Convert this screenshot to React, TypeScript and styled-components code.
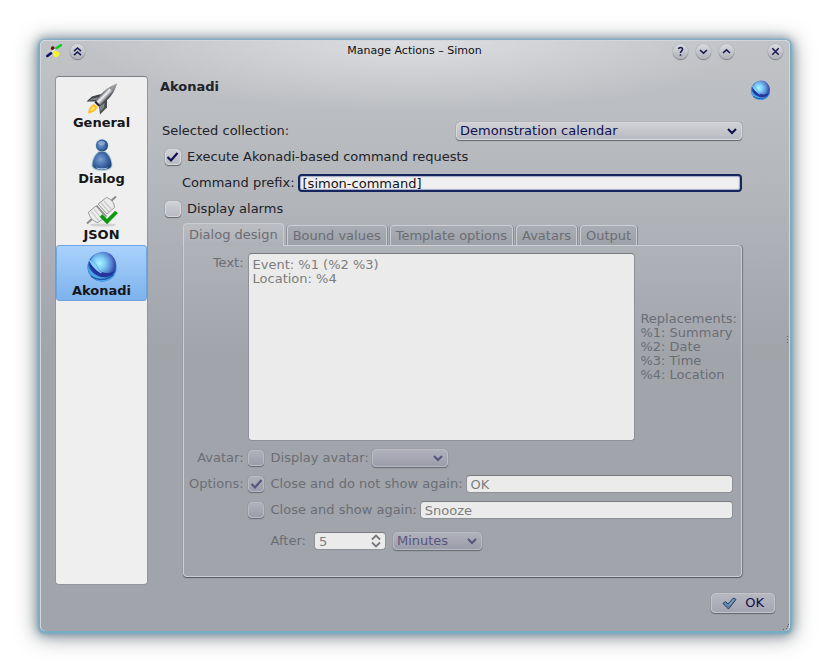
import React, { useState } from "react";
import styled, { createGlobalStyle, css } from "styled-components";

const INK = "#20222a";
const NAVY = "#0f0f4e";
const FADED = "#6b6d75";
const FADED_NAVY = "#56567f";

const GlobalStyle = createGlobalStyle`
  * { box-sizing: border-box; }
  body {
    margin: 0;
    background: #ffffff;
    color: ${INK};
    font-family: "DejaVu Sans", "Liberation Sans", sans-serif;
    font-size: 13px;
    line-height: 14px;
  }
  button, input, select, textarea { font: inherit; color: inherit; margin: 0; }
`;

const raised = css`
  border: 1px solid #d6d8dc;
  border-radius: 4px;
  background: linear-gradient(#d0d1d5, #babbc2);
  box-shadow: 0 1px 1px #62656c, 0 0 1px #7d8087;
`;

const raisedFaded = css`
  border: 1px solid #b9bbc3;
  border-radius: 4px;
  background: linear-gradient(#b0b1ba, #9c9daa);
  box-shadow: 0 1px 1px #666971, 0 0 1px #7d8087;
`;

const Dialog = styled.main`
  position: relative;
  margin: 40px;
  border: 1px solid #d2d6da;
  border-bottom: 0;
  border-radius: 5px;
  background:
    radial-gradient(ellipse 330px 72px at 50% 0, rgba(255, 255, 255, 0.45), rgba(255, 255, 255, 0)),
    linear-gradient(#c1c3c7 0, #b4b7bb 140px, #a6a9b0 260px, #a1a5aa 310px, #a1a4ab 100%);
  box-shadow: 0 1px 2px 2px #78adc6, 0 1px 8px 3px rgba(84, 120, 140, 0.55), 0 3px 20px 4px rgba(60, 66, 72, 0.5);
`;

const TitleBar = styled.header`
  display: grid;
  grid-template-columns: 1fr auto 1fr;
  align-items: center;
  height: 20px;
  padding: 0 6px 0 5px;
`;

const Title = styled.h1`
  margin: 0;
  font-size: 11px;
  font-weight: 400;
  color: #101014;
`;

const TitleGroup = styled.div<{ $end?: boolean }>`
  display: flex;
  align-items: center;
  gap: 8px;
  justify-content: ${(p) => (p.$end ? "flex-end" : "flex-start")};
`;

const RoundButton = styled.button<{ $apart?: boolean }>`
  display: grid;
  place-items: center;
  width: 15px;
  height: 15px;
  margin-left: ${(p) => (p.$apart ? "26px" : 0)};
  padding: 0;
  border: 0;
  border-radius: 50%;
  background: linear-gradient(#dadbde, #b0b2bb);
  box-shadow: 0 0 1px #7e8087, 0 1px 1px #777980;
`;

const Body = styled.div`
  display: grid;
  grid-template-columns: 93px 1fr;
  column-gap: 12px;
  padding: 15px 11px 0 14px;
`;

const PageList = styled.nav`
  min-height: 509px;
  border: 1px solid #92959a;
  border-top-color: #7c7f84;
  border-radius: 4px;
  background: #efefef;
`;

const PageButton = styled.button<{ $active: boolean }>`
  display: flex;
  flex-direction: column;
  align-items: center;
  width: 100%;
  height: 56px;
  padding: 5px 0 0;
  border: 1px solid ${(p) => (p.$active ? "#6ea6e2" : "transparent")};
  border-radius: 3px;
  background: ${(p) => (p.$active ? "linear-gradient(#a9d2fb, #7db2ec)" : "none")};
  font-weight: 700;
  line-height: 16px;
  color: #16161a;
`;

const Page = styled.section`
  display: flex;
  flex-direction: column;
`;

const PageHeader = styled.div`
  display: flex;
  justify-content: space-between;
  padding: 4px 7px 0 0;
`;

const Heading = styled.h2`
  margin: 0;
  font-size: 13px;
  font-weight: 700;
`;

const Form = styled.form`
  display: flex;
  flex-direction: column;
  margin: 17px 36px 0 2px;
`;

const Line = styled.div<{ $indent?: boolean }>`
  display: flex;
  align-items: center;
  gap: 3px;
  height: 26px;
  padding-left: ${(p) => (p.$indent ? "20px" : 0)};
`;

const Spacer = styled.span`
  flex: 1;
`;

const PickerBox = styled.span<{ $width: number }>`
  display: grid;
  align-items: center;
  width: ${(p) => p.$width}px;
  max-width: 100%;
`;

const Picker = styled.select`
  grid-area: 1 / 1;
  width: 100%;
  height: 18px;
  padding: 0 3px;
  appearance: none;
  line-height: 14px;
  ${raised}
  color: ${NAVY};
  &:disabled { opacity: 1; color: ${FADED_NAVY}; ${raisedFaded} }
`;

const PickerArrow = styled.svg`
  grid-area: 1 / 1;
  justify-self: end;
  margin-right: 5px;
  pointer-events: none;
`;

const TickLabel = styled.label<{ $faded?: boolean }>`
  display: flex;
  align-items: center;
  gap: 6px;
  margin-left: ${(p) => (p.$faded ? 0 : "2px")};
  white-space: nowrap;
`;

const TickBox = styled.span`
  display: grid;
  place-items: center;
  width: 17px;
  height: 17px;
`;

const TickInput = styled.input`
  grid-area: 1 / 1;
  width: 16px;
  height: 16px;
  appearance: none;
  ${raised}
  &:disabled { ${raisedFaded} }
`;

const TickMark = styled.svg`
  grid-area: 1 / 1;
  z-index: 1;
  pointer-events: none;
`;

const field = css`
  border: 1px solid #8e9197;
  border-top-color: #777a80;
  border-radius: 4px;
  background: #ebebeb;
`;

const TextField = styled.input`
  flex: 1;
  min-width: 0;
  height: 18px;
  padding: 0 4px;
  &:disabled { ${field} color: #7d7d7d; }
`;

const FocusField = styled(TextField)`
  border: 2px solid #17255f;
  border-radius: 4px;
  padding: 0 3px;
  background: #efefef;
  color: #141414;
  box-shadow: inset 0 0 1px 1px #a3aac6;
  outline: none;
`;

const TabArea = styled.div`
  margin: 1px 0 0 21px;
  color: ${FADED};
`;

const TabRow = styled.div`
  display: flex;
  align-items: flex-end;
  gap: 3px;
  height: 22px;
`;

const Tab = styled.button<{ $active: boolean }>`
  height: ${(p) => (p.$active ? "23px" : "20px")};
  margin-bottom: ${(p) => (p.$active ? "-1px" : 0)};
  padding: 0 5px;
  border: 1px solid #cbced2;
  border-bottom: 0;
  border-radius: 4px 4px 0 0;
  background: ${(p) => (p.$active ? "linear-gradient(#bbbdc2, #adb0b6)" : "linear-gradient(#a9acb3, #9da2a8)")};
  box-shadow: ${(p) => (p.$active ? "none" : "1px 0 0 #868a8f, -1px 0 0 #90949a")};
  color: ${FADED};
  position: relative;
  z-index: ${(p) => (p.$active ? 1 : 0)};
`;

const TabPanel = styled.div`
  display: grid;
  grid-template-columns: auto 1fr;
  column-gap: 4px;
  padding: 7px 8px 17px 5px;
  border: 1px solid #cbced2;
  border-radius: 0 4px 4px 4px;
  background: linear-gradient(#afb2b7, #a6a9b0 70px, #a1a5aa 110px, #a1a4ab);
  box-shadow: 0 1px 1px #54575d, 1px 0 1px #777a80;
`;

const RowLabel = styled.label`
  text-align: right;
  white-space: nowrap;
`;

const TopLabel = styled(RowLabel)`
  padding-top: 3px;
`;

const MiddleLabel = styled(RowLabel)`
  align-self: center;
`;

const MessageRow = styled.div`
  display: flex;
  align-items: center;
  gap: 5px;
  margin-right: -4px;
  margin-bottom: 4px;
`;

const MessageText = styled.textarea`
  flex: 1;
  min-width: 0;
  height: 188px;
  padding: 4px;
  resize: none;
  ${field}
  color: #7d7d7d;
`;

const Replacements = styled.p`
  margin: 0;
  white-space: pre;
`;

const Options = styled(Line)<{ $tall?: boolean }>`
  height: ${(p) => (p.$tall ? "36px" : "26px")};
  padding-left: ${(p) => (p.$tall ? "23px" : 0)};
`;

const SpinBox = styled.span`
  display: grid;
  align-items: center;
  width: 72px;
  margin: 0 4px 0 5px;
`;

const SpinInput = styled(TextField)`
  grid-area: 1 / 1;
  width: 100%;
  appearance: textfield;
  &::-webkit-inner-spin-button { appearance: none; }
`;

const Footer = styled.footer`
  display: flex;
  align-items: flex-end;
  flex-direction: column;
  padding: 8px 14px 0;
`;

const OkButton = styled.button`
  display: flex;
  align-items: center;
  gap: 8px;
  height: 20px;
  margin-bottom: 18px;
  padding: 0 10px;
  ${raised}
  background: linear-gradient(#b6b8c0, #a4a5b1);
  border-color: #c3c5cb;
  color: ${NAVY};
`;

const CornerGrip = styled.svg`
  position: absolute;
  right: 0;
  bottom: 1px;
`;

const SideGrip = styled.svg`
  position: absolute;
  right: 0;
  top: 50%;
`;

function Chevron({ faded }: { faded?: boolean }) {
  return (
    <PickerArrow width="10" height="8" viewBox="0 0 10 8" aria-hidden="true">
      <path d="M1 2 5 6 9 2" fill="none" stroke={faded ? FADED_NAVY : NAVY} strokeWidth="2" />
    </PickerArrow>
  );
}

function Tick({ label, checked, disabled }: { label: string; checked?: boolean; disabled?: boolean }) {
  const [on, setOn] = useState(Boolean(checked));
  return (
    <TickLabel $faded={disabled}>
      <TickBox>
        <TickInput type="checkbox" checked={on} disabled={disabled} onChange={() => setOn(!on)} />
        {on && (
          <TickMark width="13" height="13" viewBox="0 0 13 13" aria-hidden="true">
            <path d="M1.5 6 5 9.500 11.5 2" fill="none" stroke={disabled ? FADED_NAVY : NAVY} strokeWidth="2.2" />
          </TickMark>
        )}
      </TickBox>
      {label}
    </TickLabel>
  );
}

function Glyph({ d }: { d: string }) {
  return (
    <svg width="11" height="11" viewBox="0 0 11 11" aria-hidden="true">
      <path d={d} fill="none" stroke="#1b1b52" strokeWidth="1.6" />
    </svg>
  );
}

function AppLogo() {
  return (
    <svg width="16" height="14" viewBox="0 0 16 14" aria-hidden="true">
      <path d="M10.5 4 15 1.200" stroke="#12cf22" strokeWidth="2.6" strokeLinecap="round" />
      <path d="M1.3 12 5 9.300" stroke="#101078" strokeWidth="2.6" strokeLinecap="round" />
      <circle cx="6.8" cy="4.2" r="1.9" fill="#6a1010" />
      <path d="M6 8 9.200 5" stroke="#e8f4e8" strokeWidth="1.4" />
      <path d="M7.3 7.500c2.500-1 6 0 6 2.300s-2 3.400-3.800 3.400S6.700 10.500 7.300 7.500z" fill="#fbf42a" />
    </svg>
  );
}

function Rocket() {
  return (
    <svg width="32" height="32" viewBox="0 0 32 32" aria-hidden="true">
      <defs>
        <linearGradient id="hull" x1="0.35" y1="0.35" x2="0.65" y2="0.65">
          <stop offset="0.1" stopColor="#63666b" />
          <stop offset="0.4" stopColor="#f2f3f4" />
          <stop offset="0.6" stopColor="#b6b8bc" />
          <stop offset="0.9" stopColor="#3b3d42" />
        </linearGradient>
      </defs>
      <path d="M8 21c-4 2-5.500 5-6 9.500 4.500-.5 8-2.500 9.500-6.500z" fill="#ffbd2c" />
      <path d="M8 23.500c-2 1-3 2.500-3.500 4.500 2-.5 3.500-1.500 4.500-3.500z" fill="#fff27c" />
      <path d="M15 11 6 13.500 0.500 18.500 11 18.500z" fill="#3d4045" />
      <path d="M13 14 6 15.500 3 17.500l7.500-.5z" fill="#7f8287" />
      <path d="M21 16v8.500l-7 7-1-9z" fill="#4b4e53" />
      <path d="m18.500 19.500-.5 5-3.500 4-.5-5z" fill="#85888d" />
      <path d="M31 .5C22 4 13 11 9 19.500l4 4C21.500 18.500 28.500 10 31 .5z" fill="url(#hull)" />
      <path d="M31 .5c-3 1.200-5.500 2.500-8 4.500l3.500 3.500C28.500 6 30 3.500 31 .5z" fill="#7a7d82" opacity="0.7" />
      <path d="m8.500 19.500 4 4 1.500-1.500-4-4z" fill="#232529" />
    </svg>
  );
}

function Person() {
  return (
    <svg width="32" height="32" viewBox="0 0 32 32" aria-hidden="true">
      <defs>
        <radialGradient id="pawn" cx="0.42" cy="0.45" r="0.62">
          <stop offset="0" stopColor="#7ba1d2" />
          <stop offset="0.5" stopColor="#4670ac" />
          <stop offset="1" stopColor="#1f427a" />
        </radialGradient>
      </defs>
      <path d="M16 11C9 12 5.500 20 5.500 26.500 5.500 30.500 11 32 16 32s10.500-1.500 10.500-5.500C26.500 20 23 12 16 11z" fill="#b4cfd6" />
      <path d="M16 12C10 13 6.500 20.500 6.500 26c0 3.500 5 4.800 9.500 4.800s9.500-1.300 9.500-4.800C25.500 20.500 22 13 16 12z" fill="url(#pawn)" />
      <circle cx="16" cy="6.500" r="6.500" fill="#b4cfd6" />
      <circle cx="16" cy="6.500" r="6" fill="url(#pawn)" />
      <ellipse cx="15.500" cy="4" rx="3.500" ry="2" fill="#a5c0e2" opacity="0.6" />
      <path d="M9.500 28.500c3 1 10 1 13 0-2 2.500-11 2.500-13 0z" fill="#a6cbe9" />
    </svg>
  );
}

function Connector() {
  return (
    <svg width="32" height="32" viewBox="0 0 32 32" aria-hidden="true">
      <ellipse cx="17" cy="30" rx="13" ry="1.600" fill="#d2d2d2" />
      <path d="M1 28.500 7 23M24 7l6-5.500" stroke="#8b8b8b" strokeWidth="2" />
      <g stroke="#9a9a9a" fill="#ececec" strokeLinejoin="round">
        <path d="m2.500 17 7.500-6 9.500 11-7.500 5.500C7.500 27 3 22 2.500 17z" />
        <path d="m12 9 8.500-6.500C25 4 28.500 8 28.500 12.500L21 19z" />
      </g>
      <g stroke="#c8c8c8" strokeWidth="1.200">
        <path d="m5 16 8 10M8 14l8 10M15 8l8 9M18 6l8 9" />
      </g>
      <path d="m10.500 10.500 10 11" stroke="#8a8a8a" strokeWidth="1.200" />
      <path d="m15 20.500 6 6 9.500-9.500" fill="none" stroke="#0b990f" strokeWidth="3.800" />
    </svg>
  );
}

function Globe({ size, id }: { size: number; id: string }) {
  return (
    <svg width={size} height={size} viewBox="0 1 32 30" aria-hidden="true">
      <defs>
        <radialGradient id={id} cx="0.36" cy="0.45" r="0.66">
          <stop offset="0" stopColor="#a8f6ff" />
          <stop offset="0.35" stopColor="#7fcdf6" />
          <stop offset="0.7" stopColor="#5a86d4" />
          <stop offset="1" stopColor="#2a3c9c" />
        </radialGradient>
      </defs>
      <circle cx="16" cy="16" r="14.500" fill="#2f6cc8" />
      <circle cx="17" cy="13.500" r="12.800" fill={`url(#${id})`} />
      <path d="M3.500 10c3 7 10 12 18 12 4 0 7-1.500 8.500-3.500-1 4.500-6 7.500-11.500 7.500C9 26 2.500 19 3.500 10z" fill="#22349e" />
      <path d="M1.500 13c1.500 7 8 12.500 15.500 13.500 6 .8 11.500-2 13.500-8.500 0 7-6 12.500-14 12.500C7.500 30.500 1 22 1.500 13z" fill="#4aa6e6" />
      <path d="M3.500 9c2.500 5 7 10.500 12 13" fill="none" stroke="#8ed2f8" strokeWidth="1.300" />
      <path d="M5 8c3 2 7 8 9 13" fill="none" stroke="#6aaee8" />
      <path d="M5 25c6 4.500 16 5 22.500-1.500" fill="none" stroke="#2250ac" strokeWidth="1.500" />
    </svg>
  );
}

function OkMark() {
  return (
    <svg width="15" height="13" viewBox="0 0 15 13" aria-hidden="true">
      <path d="M1 6.500 3.500 4.500 6 7 11.500 1 14 2.500 6.500 12z" fill="#5d87b0" stroke="#263f5e" strokeLinejoin="round" />
      <path d="m7 8 5-5.500" stroke="#8fb1d0" />
    </svg>
  );
}

const pages = [
  { name: "General", icon: <Rocket /> },
  { name: "Dialog", icon: <Person /> },
  { name: "JSON", icon: <Connector /> },
  { name: "Akonadi", icon: <Globe size={32} id="globe-large" /> },
];

const tabs = ["Dialog design", "Bound values", "Template options", "Avatars", "Output"];

export default function App() {
  return (
    <>
      <GlobalStyle />
      <Dialog>
        <TitleBar>
          <TitleGroup>
            <AppLogo />
            <RoundButton aria-label="Shade"><Glyph d="M2 5.200 5.500 2 9 5.200M2 9.200 5.500 6 9 9.200" /></RoundButton>
          </TitleGroup>
          <Title>Manage Actions – Simon</Title>
          <TitleGroup $end>
            <RoundButton aria-label="Help"><Glyph d="M3.500 3c.5-2 4-2 4 .2C7.500 5 5.500 5 5.500 7M5.500 8.200v1.600" /></RoundButton>
            <RoundButton aria-label="Minimize"><Glyph d="M2 4 5.500 7.200 9 4" /></RoundButton>
            <RoundButton aria-label="Maximize"><Glyph d="M2 7 5.500 3.800 9 7" /></RoundButton>
            <RoundButton aria-label="Close" $apart><Glyph d="M2.300 2.300 8.700 8.700M8.700 2.300 2.300 8.700" /></RoundButton>
          </TitleGroup>
        </TitleBar>
        <Body>
          <PageList aria-label="Pages">
            {pages.map((p) => (
              <PageButton key={p.name} $active={p.name === "Akonadi"}>
                {p.icon}
                {p.name}
              </PageButton>
            ))}
          </PageList>
          <Page>
            <PageHeader>
              <Heading>Akonadi</Heading>
              <Globe size={21} id="globe-small" />
            </PageHeader>
            <Form onSubmit={(e) => e.preventDefault()}>
              <Line>
                <label htmlFor="collection">Selected collection:</label>
                <Spacer />
                <PickerBox $width={286}>
                  <Picker id="collection"><option>Demonstration calendar</option></Picker>
                  <Chevron />
                </PickerBox>
              </Line>
              <Line><Tick label="Execute Akonadi-based command requests" checked /></Line>
              <Line $indent>
                <label htmlFor="prefix">Command prefix:</label>
                <FocusField id="prefix" defaultValue="[simon-command]" />
              </Line>
              <Line><Tick label="Display alarms" /></Line>
              <TabArea>
                <TabRow role="tablist">
                  {tabs.map((t, i) => (
                    <Tab key={t} type="button" role="tab" aria-selected={i === 0} $active={i === 0} disabled>{t}</Tab>
                  ))}
                </TabRow>
                <TabPanel role="tabpanel">
                  <TopLabel htmlFor="message">Text:</TopLabel>
                  <MessageRow>
                    <MessageText id="message" disabled defaultValue={"Event: %1 (%2 %3)\nLocation: %4"} />
                    <Replacements>{"Replacements:\n%1: Summary\n%2: Date\n%3: Time\n%4: Location"}</Replacements>
                  </MessageRow>
                  <MiddleLabel htmlFor="avatar">Avatar:</MiddleLabel>
                  <Options>
                    <Tick label="Display avatar:" disabled />
                    <PickerBox $width={76}>
                      <Picker id="avatar" disabled />
                      <Chevron faded />
                    </PickerBox>
                  </Options>
                  <MiddleLabel as="span">Options:</MiddleLabel>
                  <Options>
                    <Tick label="Close and do not show again:" checked disabled />
                    <TextField aria-label="Close and do not show again text" disabled defaultValue="OK" />
                  </Options>
                  <span />
                  <Options>
                    <Tick label="Close and show again:" disabled />
                    <TextField aria-label="Close and show again text" disabled defaultValue="Snooze" />
                  </Options>
                  <span />
                  <Options $tall>
                    <label htmlFor="delay">After:</label>
                    <SpinBox>
                      <SpinInput id="delay" type="number" disabled defaultValue={5} />
                      <PickerArrow width="10" height="14" viewBox="0 0 10 14" aria-hidden="true">
                        <path d="M1 5.500 5 1.500 9 5.500M1 8.500 5 12.500 9 8.500" fill="none" stroke="#77777c" strokeWidth="1.800" />
                      </PickerArrow>
                    </SpinBox>
                    <PickerBox $width={89}>
                      <Picker aria-label="Delay unit" disabled><option>Minutes</option></Picker>
                      <Chevron faded />
                    </PickerBox>
                  </Options>
                </TabPanel>
              </TabArea>
            </Form>
          </Page>
        </Body>
        <Footer>
          <OkButton><OkMark />OK</OkButton>
        </Footer>
        <SideGrip width="2" height="7" viewBox="0 0 2 7" aria-hidden="true">
          <path d="M0 0h1v1H0zM0 3h1v1H0zM0 6h1v1H0z" fill="#5c5f66" />
        </SideGrip>
        <CornerGrip width="6" height="6" viewBox="0 0 6 6" aria-hidden="true">
          <path d="M5 0h1v1H5zM4 2h1v1H4zM3 4h1v1H3zM0 5h1v1H0z" fill="#5c5f66" />
        </CornerGrip>
      </Dialog>
    </>
  );
}
